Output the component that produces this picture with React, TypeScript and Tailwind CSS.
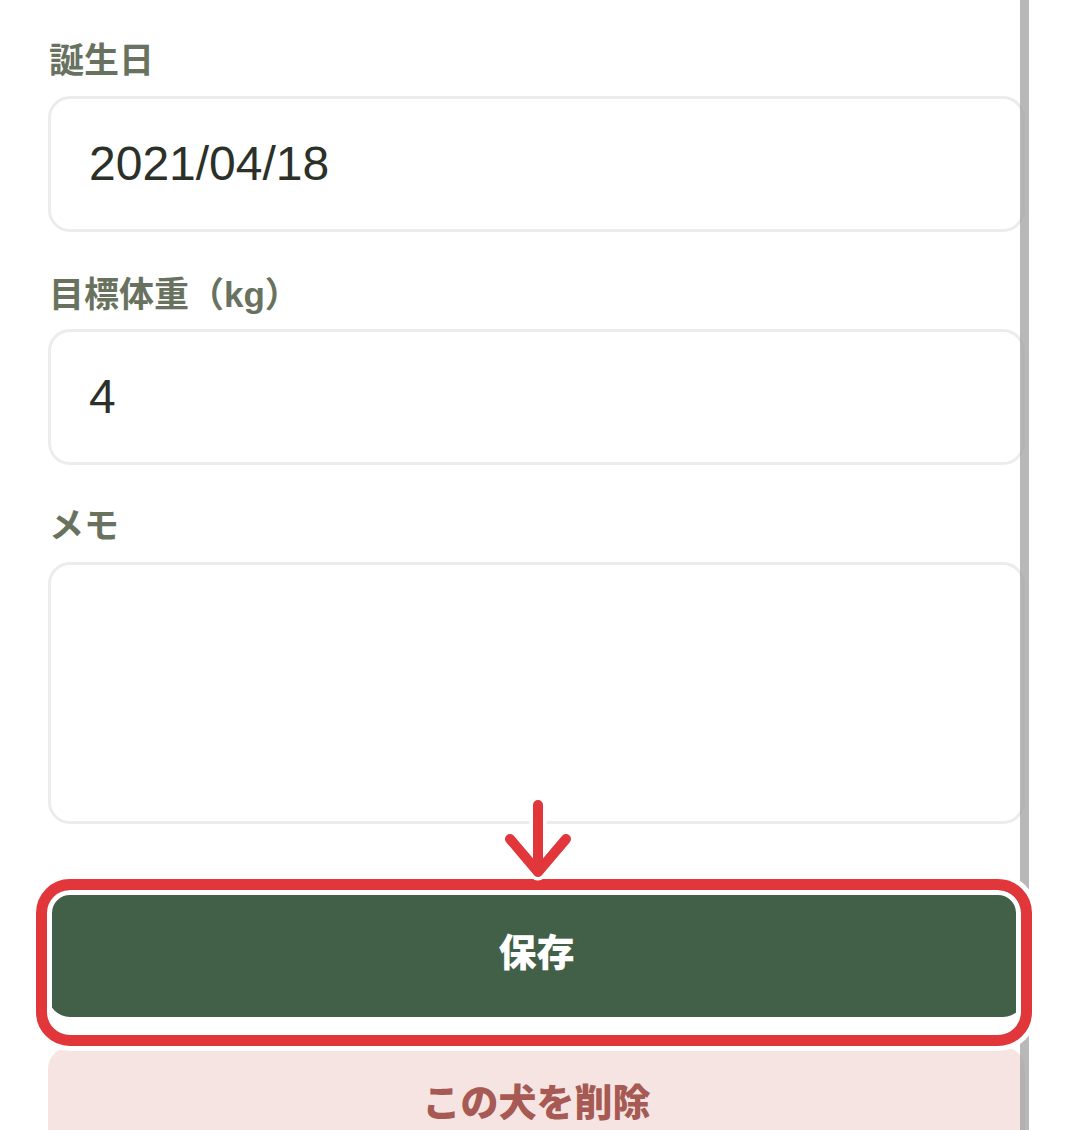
const labelCls =
  "h-[40px] leading-[40px] text-[35px] font-bold text-[#69725f]";
const fieldCls =
  "flex items-center rounded-[22px] border-[3px] border-[#ececec] bg-white pl-[38px] text-[48px] text-[#2b3029]";

function Field({ value }: { value: string }) {
  return <div className={`${fieldCls} h-[136px]`}>{value}</div>;
}

export default function App() {
  return (
    <div
      className="relative w-[1074px] h-[1130px] overflow-hidden bg-white"
      style={{ fontFamily: '"Liberation Sans", "Noto Sans CJK JP", sans-serif' }}
    >
      <div className="flex flex-col w-[1025px] pl-[48px] pt-[41px]">
        <div className={`${labelCls} pl-[1px]`}>誕生日</div>
        <div className="mt-[15px]">
          <Field value="2021/04/18" />
        </div>

        <div className={`${labelCls} mt-[43px] pl-[1px]`}>目標体重（kg）</div>
        <div className="mt-[14px]">
          <Field value="4" />
        </div>

        <div className={`${labelCls} mt-[41px] pl-[1px]`}>メモ</div>
        <div className="mt-[16px] h-[262px] rounded-[22px] border-[3px] border-[#ececec] bg-white" />

        <button className="mt-[66px] h-[127px] rounded-[22px] bg-[#425f47] text-[38px] font-black text-white">
          保存
        </button>
        <button className="mt-[30px] h-[112px] rounded-[22px] bg-[#f5e4e2] text-[38px] font-black text-[#a65a53]">
          この犬を削除
        </button>
      </div>

      {/* scrollbar */}
      <div className="absolute top-0 left-[1020px] w-[9px] h-full bg-[#a0a0a0]/75" />

      {/* annotation frame */}
      <div className="absolute left-[36px] top-[879px] w-[996px] h-[167px] rounded-[34px] border-[11px] border-[#e1363a] shadow-[0_0_0_5px_#fff,inset_0_0_0_5px_#fff]" />

      {/* annotation arrow */}
      <svg
        className="absolute left-[488px] top-[790px]"
        width="100"
        height="100"
        viewBox="488 790 100 100"
        fill="none"
        strokeLinecap="round"
        strokeLinejoin="round"
      >
        <path d="M538 805 V872 M510 839 L538 872 L566 839" stroke="#fff" strokeWidth="17" />
        <path d="M538 805 V872 M510 839 L538 872 L566 839" stroke="#e1363a" strokeWidth="10" />
      </svg>
    </div>
  );
}
